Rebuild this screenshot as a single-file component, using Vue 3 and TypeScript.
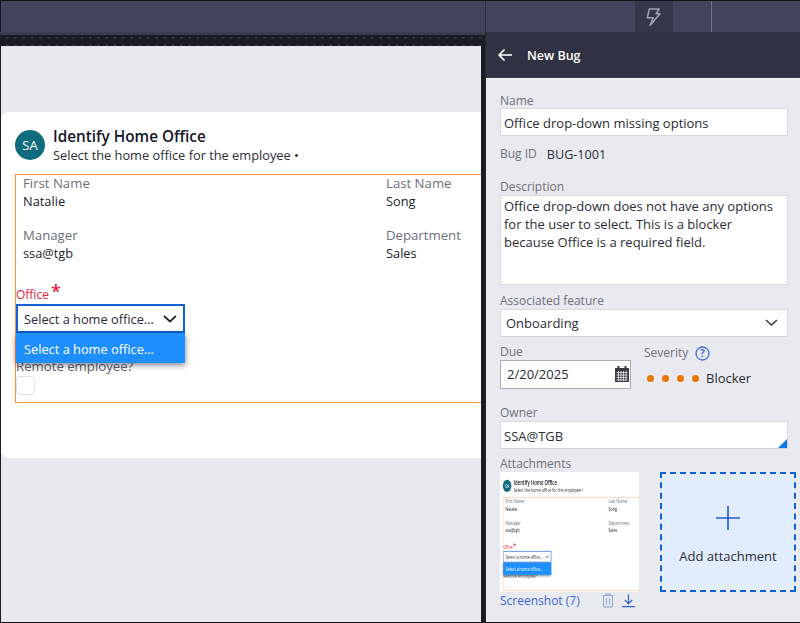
<script setup lang="ts">
const dots = [0, 1, 2, 3]
</script>

<template>
  <div class="shell">
    <header class="topbar">
      <div class="topbar-left"></div>
      <div class="topbar-right">
        <div class="bolt-tab">
          <svg width="16" height="18" viewBox="0 0 16 18" fill="none" stroke="#a0a2ae" stroke-width="1.5" stroke-linejoin="round">
            <path d="M3.3 1h10L10 5.8h4L4 17.5l3.3-7.7h-6z" />
          </svg>
        </div>
        <div class="divider"></div>
      </div>
    </header>

    <div class="columns">
      <section class="left-col">
        <div class="strip"></div>
        <div class="dot-band"></div>
        <main class="canvas">
          <div class="card">
            <div class="card-head">
              <div class="avatar">SA</div>
              <div>
                <h1 class="card-title">Identify Home Office</h1>
                <p class="card-sub">Select the home office for the employee &bull;</p>
              </div>
            </div>
            <div class="form-box">
              <div class="info-grid">
                <div class="info"><div class="lbl">First Name</div><div class="val">Natalie</div></div>
                <div class="info"><div class="lbl">Last Name</div><div class="val">Song</div></div>
                <div class="info"><div class="lbl">Manager</div><div class="val">ssa@tgb</div></div>
                <div class="info"><div class="lbl">Department</div><div class="val">Sales</div></div>
              </div>
              <div class="office-label">Office <span class="req">*</span></div>
              <div class="office-wrap">
                <div class="office-select">
                  <span>Select a home office...</span>
                  <svg width="14" height="8" viewBox="0 0 14 8" fill="none" stroke="#22242c" stroke-width="1.7"><path d="M1 1l6 5.5L13 1" /></svg>
                </div>
                <div class="office-menu">Select a home office...</div>
              </div>
              <div class="remote-label">Remote employee?</div>
              <div class="check"></div>
            </div>
          </div>
        </main>
      </section>

      <aside class="panel">
        <div class="panel-head">
          <svg width="16" height="14" viewBox="0 0 16 14" fill="none" stroke="#fff" stroke-width="1.7"><path d="M15 7H2M7.5 1.5L2 7l5.5 5.5" /></svg>
          <span>New Bug</span>
        </div>
        <div class="panel-body">
          <div class="f-label first">Name</div>
          <div class="input name-input">Office drop-down missing options</div>

          <div class="bug-row"><span class="f-label">Bug ID</span><span class="bug-id">BUG-1001</span></div>

          <div class="f-label desc-label">Description</div>
          <div class="input textarea">Office drop-down does not have any options for the user to select. This is a blocker because Office is a required field.</div>

          <div class="f-label assoc-label">Associated feature</div>
          <div class="input select">
            <span>Onboarding</span>
            <svg width="13" height="8" viewBox="0 0 13 8" fill="none" stroke="#33353f" stroke-width="1.4"><path d="M1 1l5.5 5L12 1" /></svg>
          </div>

          <div class="due-row">
            <div class="due">
              <div class="f-label">Due</div>
              <div class="input date">
                <span>2/20/2025</span>
                <svg width="14" height="16" viewBox="0 0 14 16"><path fill="#3a3c44" d="M0 2h2.5V0h2v2h5V0h2v2H14v14H0z" /><path stroke="#e8eaef" stroke-width=".8" d="M1.5 6.5h11M1.5 9h11M1.5 11.5h11M1.5 14h11M3.5 5v10M6 5v10M8.5 5v10M11 5v10" /></svg>
              </div>
            </div>
            <div class="severity">
              <div class="sev-head">
                <span class="f-label">Severity</span>
                <svg width="15" height="15" viewBox="0 0 15 15"><circle cx="7.5" cy="7.5" r="6.5" fill="none" stroke="#3f6fdc" stroke-width="1.3" /><text x="7.5" y="11" text-anchor="middle" font-size="10" font-weight="700" font-family="Open Sans, sans-serif" fill="#3f6fdc">?</text></svg>
              </div>
              <div class="sev-value">
                <span v-for="d in dots" :key="d" class="dot"></span>
                <span class="sev-text">Blocker</span>
              </div>
            </div>
          </div>

          <div class="f-label owner-label">Owner</div>
          <div class="input owner">SSA@TGB<span class="corner"></span></div>

          <div class="f-label attach-label">Attachments</div>
          <div class="attach-row">
            <div class="shot">
              <div class="thumb">
                <div class="thumb-inner">
                  <div class="card-head">
                    <div class="avatar">SA</div>
                    <div>
                      <h1 class="card-title">Identify Home Office</h1>
                      <p class="card-sub">Select the home office for the employee &bull;</p>
                    </div>
                  </div>
                  <div class="form-box">
                    <div class="info-grid">
                      <div class="info"><div class="lbl">First Name</div><div class="val">Natalie</div></div>
                      <div class="info"><div class="lbl">Last Name</div><div class="val">Song</div></div>
                      <div class="info"><div class="lbl">Manager</div><div class="val">ssa@tgb</div></div>
                      <div class="info"><div class="lbl">Department</div><div class="val">Sales</div></div>
                    </div>
                    <div class="office-label">Office <span class="req">*</span></div>
                    <div class="office-wrap">
                      <div class="office-select">
                        <span>Select a home office...</span>
                        <svg width="14" height="8" viewBox="0 0 14 8" fill="none" stroke="#22242c" stroke-width="1.7"><path d="M1 1l6 5.5L13 1" /></svg>
                      </div>
                      <div class="office-menu">Select a home office...</div>
                    </div>
                    <div class="remote-label">Remote employee?</div>
                    <div class="check"></div>
                  </div>
                </div>
              </div>
              <div class="shot-foot">
                <a class="shot-link">Screenshot (7)</a>
                <svg class="trash" width="12" height="15" viewBox="0 0 12 15" fill="none" stroke="#8fa4dc" stroke-width="1"><path d="M.5 2.5h11M4 2.5V1h4v1.5M1.5 2.5v11.5h9V2.5M4.5 5.5v6M7.5 5.5v6" /></svg>
                <svg width="13" height="15" viewBox="0 0 14 15" fill="none" stroke="#2f5fd0" stroke-width="1.3"><path d="M7 1v9.5M3 7l4 4 4-4M0 14h14" /></svg>
              </div>
            </div>
            <div class="add-box">
              <svg width="26" height="26" viewBox="0 0 26 26" fill="none" stroke="#2257d6" stroke-width="1.6"><path d="M13 1v24M1 13h24" /></svg>
              <span>Add attachment</span>
            </div>
          </div>
        </div>
      </aside>
    </div>
  </div>
</template>

<style>
html,
body {
  margin: 0;
  background: #14151c;
}
</style>

<style scoped>
* {
  box-sizing: border-box;
}

.shell {
  width: 800px;
  height: 623px;
  padding: 1px 0 1px 0;
  display: flex;
  flex-direction: column;
  background: #14151c;
  font-family: "Open Sans", sans-serif;
  overflow: hidden;
}

.topbar {
  height: 31px;
  flex: none;
  display: flex;
  background: #41445a;
}

.topbar-left {
  width: 486px;
  border-left: 1px solid #14151c;
  border-right: 1px solid #2c2e3d;
}

.topbar-right {
  flex: 1;
  display: flex;
  padding-left: 149px;
}

.bolt-tab {
  width: 38px;
  display: flex;
  align-items: center;
  justify-content: center;
  background: #343748;
}

.divider {
  width: 1px;
  margin-left: 38px;
  background: #6d7087;
}

.columns {
  flex: 1;
  min-height: 0;
  display: flex;
}

.left-col {
  width: 485px;
  display: flex;
  flex-direction: column;
  background: #1a1c25;
}

.strip {
  height: 3px;
  background: #3a3d50;
}

.dot-band {
  height: 11px;
  background-color: #1a1c25;
  background-image: radial-gradient(circle, #3b3e4c 0.9px, transparent 1.2px);
  background-size: 8.3px 7.5px;
  background-position: 3px -1px;
}

.canvas {
  flex: 1;
  width: 480px;
  margin-left: 1px;
  padding-top: 66px;
  background: #e7e9ee;
}

.card {
  height: 346px;
  background: #fff;
  border-radius: 8px 0 0 8px;
  overflow: hidden;
  padding-top: 16px;
}

.card-head {
  display: flex;
  gap: 8px;
  padding-left: 14px;
  height: 46px;
}

.avatar {
  width: 30px;
  height: 30px;
  margin-top: 2px;
  border-radius: 50%;
  background: #0f6b7e;
  color: #fff;
  font-size: 13px;
  line-height: 30px;
  text-align: center;
}

.card-title {
  margin: 0;
  font-size: 15.3px;
  line-height: 16px;
  font-weight: 600;
  color: #14162a;
}

.card-sub {
  margin: 2px 0 0;
  font-size: 12.8px;
  line-height: 18px;
  color: #2a2c38;
}

.form-box {
  position: relative;
  width: 490px;
  height: 229px;
  margin-left: 14px;
  border: 1px solid #fb9038;
}

.info-grid {
  display: grid;
  grid-template-columns: 363px 1fr;
  grid-auto-rows: 52px;
  padding-left: 7px;
}

.lbl {
  font-size: 13.2px;
  line-height: 17px;
  color: #6d6f7a;
}

.val {
  font-size: 12.8px;
  line-height: 18px;
  color: #20222c;
}

.office-label {
  margin-top: 6px;
  height: 18px;
  font-size: 12px;
  line-height: 18px;
  color: #e3213c;
}

.req {
  margin-left: -1px;
  font-size: 18px;
  font-weight: 600;
  line-height: 12px;
  vertical-align: 1px;
}

.office-wrap {
  position: relative;
  width: 169px;
  margin-top: 1px;
}

.office-select {
  height: 29px;
  border: 2px solid #1261d6;
  background: #fff;
  display: flex;
  align-items: center;
  justify-content: space-between;
  padding: 0 6px;
  font-size: 12.8px;
  color: #2a2c36;
}

.office-menu {
  position: absolute;
  top: 29px;
  left: 0;
  width: 169px;
  height: 30px;
  padding-left: 8px;
  background: #1e8fff;
  color: #fff;
  font-size: 12.8px;
  line-height: 32px;
  box-shadow: 0 2px 6px rgba(20, 22, 40, 0.55);
  z-index: 2;
}

.remote-label {
  margin-top: 25px;
  height: 16px;
  font-size: 13.2px;
  line-height: 16px;
  color: #5d5f6a;
}

.check {
  width: 19px;
  height: 19px;
  margin-top: 2px;
  border: 1px solid #dfe2e9;
  border-radius: 4px;
  background: #fff;
}

.panel {
  flex: 1;
  display: flex;
  flex-direction: column;
  background: #e8eaef;
  border-left: 1px solid #24252f;
}

.panel-head {
  height: 46px;
  flex: none;
  display: flex;
  align-items: center;
  gap: 14px;
  padding-left: 11px;
  background: #2f3242;
  color: #fff;
  font-size: 12.5px;
  font-weight: 600;
}

.panel-body {
  flex: 1;
  padding: 0 12px 0 14px;
  border-top: 1px solid #f4f5f8;
}

.f-label {
  font-size: 12px;
  line-height: 16px;
  color: #6f717c;
}

.first {
  margin-top: 14px;
}

.input {
  background: #fff;
  border: 1px solid #d6d8de;
  font-size: 13px;
  line-height: 18px;
  color: #2a2c36;
  height: 28px;
  padding: 4px 3px;
}

.name-input {
  margin-top: -1px;
  padding-top: 5px;
}

.bug-row {
  display: flex;
  align-items: center;
  gap: 10px;
  margin-top: 9px;
  height: 18px;
}

.bug-id {
  font-size: 12.6px;
  color: #2a2c36;
}

.desc-label {
  margin-top: 16px;
}

.textarea {
  height: 90px;
  padding-top: 1px;
  padding-bottom: 1px;
}

.assoc-label {
  margin-top: 8px;
}

.select {
  display: flex;
  align-items: center;
  justify-content: space-between;
  padding-left: 5px;
  padding-right: 9px;
}

.due-row {
  display: flex;
  margin-top: 7px;
}

.due {
  width: 131px;
}

.date {
  height: 29px;
  padding: 3px 1px 5px 6px;
  display: flex;
  align-items: center;
  justify-content: space-between;
  border-color: #a9abb3;
}

.severity {
  margin-left: 13px;
}

.sev-head {
  display: flex;
  align-items: center;
  gap: 7px;
  height: 18px;
}

.sev-value {
  display: flex;
  align-items: center;
  margin-top: 7px;
  margin-left: 3px;
}

.dot {
  width: 7px;
  height: 7px;
  border-radius: 50%;
  background: #ea7600;
  margin-right: 8px;
}

.sev-text {
  margin-left: -1px;
  font-size: 13px;
  color: #2a2c36;
}

.owner-label {
  margin-top: 16px;
}

.owner {
  position: relative;
  padding-top: 5px;
}

.corner {
  position: absolute;
  right: 0;
  bottom: 0;
  border-style: solid;
  border-width: 0 0 9px 9px;
  border-color: transparent transparent #0f76f0 transparent;
}

.attach-label {
  margin-top: 7px;
}

.attach-row {
  display: flex;
  gap: 21px;
  margin-right: -8px;
}

.shot {
  width: 139px;
}

.thumb {
  position: relative;
  height: 120px;
  background: #fff;
  overflow: hidden;
  filter: blur(0.7px);
}

.thumb-inner {
  position: absolute;
  top: 7px;
  left: 0;
  width: 490px;
  height: 280px;
  transform-origin: 0 0;
  transform: scale(0.284, 0.41);
}

.thumb-inner .card-head {
  height: 44px;
  padding-left: 10px;
}

.thumb-inner .form-box {
  margin-left: 10px;
  border: 2px solid #fcd3b4;
}

.shot-foot {
  display: flex;
  align-items: center;
  padding-right: 4px;
  height: 17px;
}

.shot-link {
  flex: 1;
  font-size: 12px;
  color: #3b68dc;
}

.trash {
  margin-right: 8px;
}

.add-box {
  width: 136px;
  height: 120px;
  display: flex;
  flex-direction: column;
  align-items: center;
  padding-top: 31px;
  gap: 16px;
  background: #e1edfc;
  border: 2px dashed #1261d6;
  font-size: 13px;
  color: #2a2c36;
}
</style>
